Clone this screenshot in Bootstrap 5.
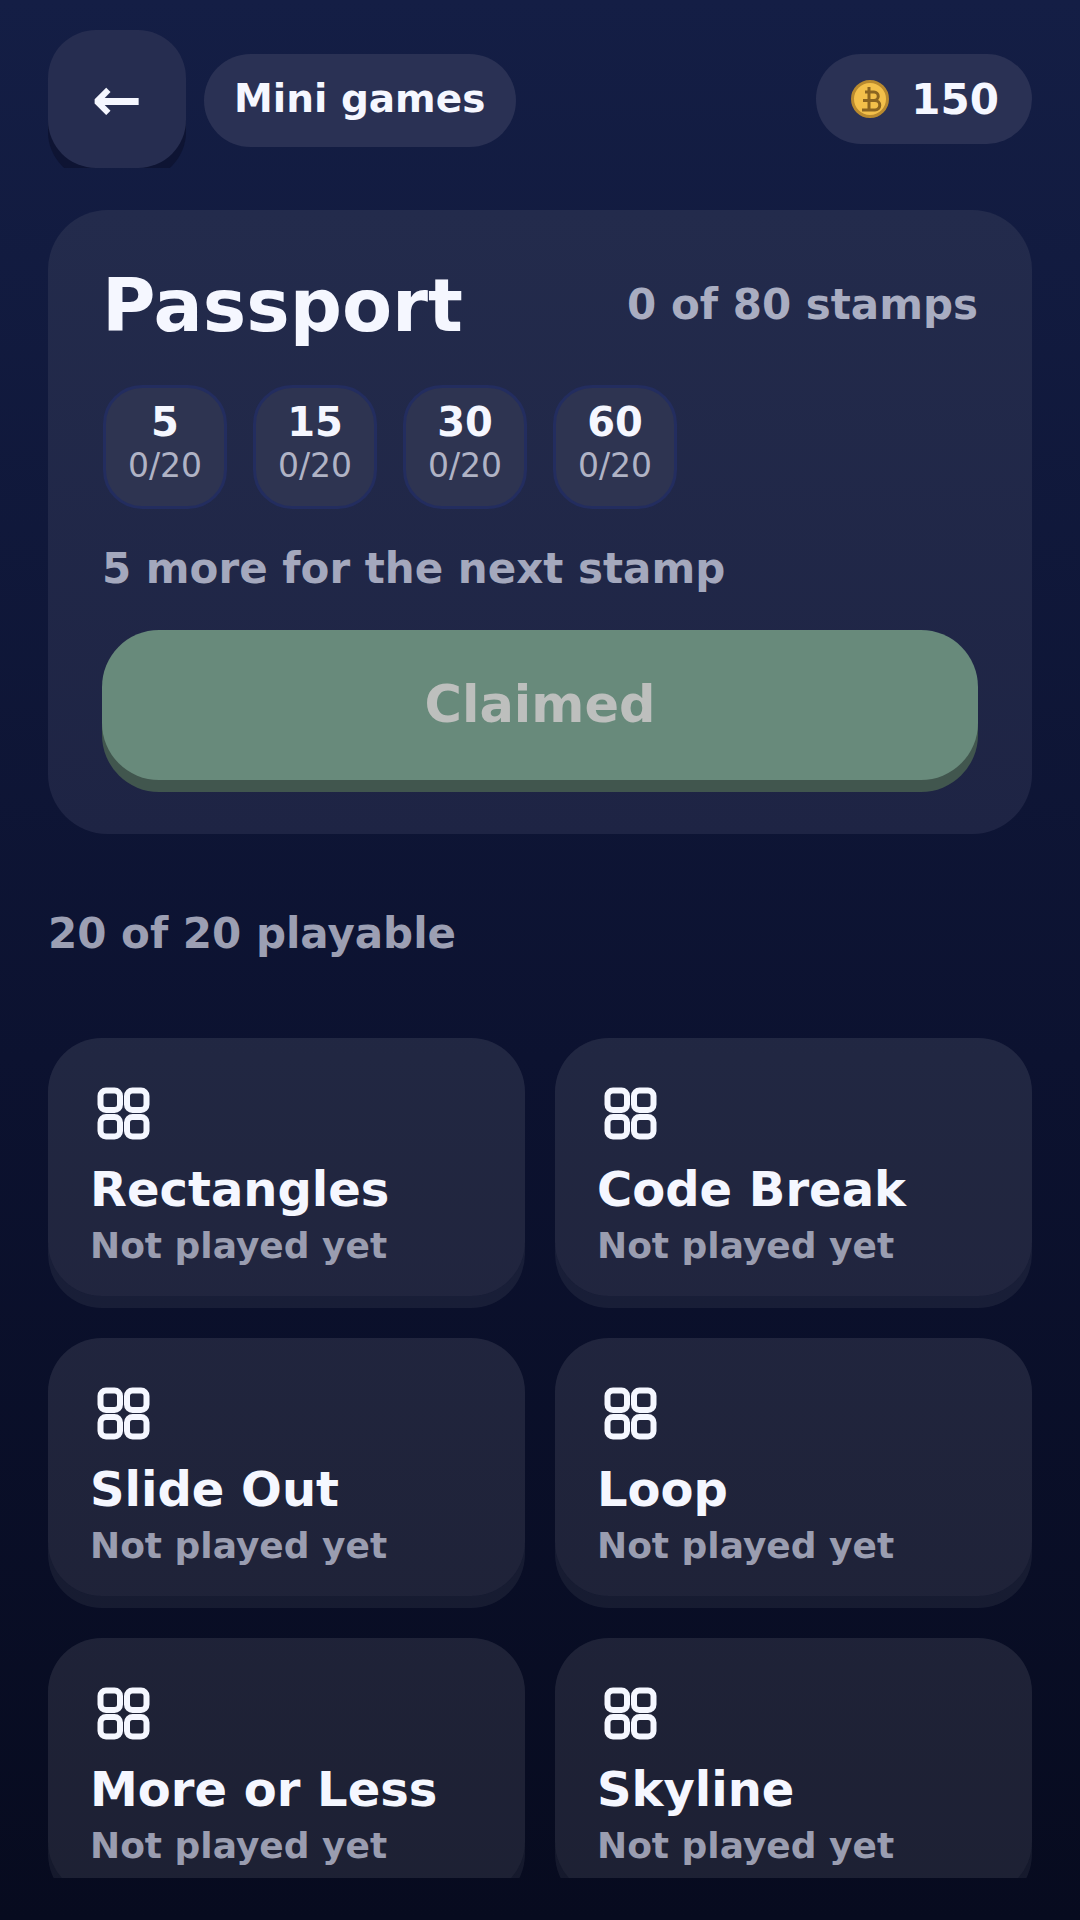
<!DOCTYPE html>
<html lang="en">
<head>
  <meta charset="UTF-8">
  <title>Mini games</title>
  <link href="https://cdn.jsdelivr.net/npm/bootstrap@5.3.3/dist/css/bootstrap.min.css" rel="stylesheet">
  <style>
    html, body { height: 1920px; }
    body {
      margin: 0;
      overflow: hidden;
      font-family: "DejaVu Sans", sans-serif;
      background: linear-gradient(180deg, #141e45 0%, #0c1230 55%, #070b1f 100%);
      color: #f5f7ff;
    }
    .app-shell { height: 1920px; padding: 30px 48px 42px; }
    .top-bar { height: 138px; overflow: hidden; gap: 18px; }
    .back-btn {
      width: 138px; height: 138px; flex: none;
      background: #262d50; border-radius: 48px;
      box-shadow: 0 12px 0 #0e1433;
      font-size: 60px; font-weight: 700; line-height: 1;
    }
    .top-pill { background: #2a3154; border-radius: 48px; font-weight: 700; }
    .title-pill { height: 93px; margin-top: 3px; padding: 0 31px 3px 30px; font-size: 39px; }
    .coin-pill { height: 90px; padding: 0 33px 0 35px; font-size: 42px; gap: 22px; }
    .scroll-area { flex: 1; min-height: 0; overflow: hidden; padding-top: 42px; }
    .passport-card {
      height: 624px; padding: 54px;
      background: linear-gradient(180deg, #232b4c, #1e2444);
      border-radius: 60px;
    }
    .passport-title { font-size: 73px; font-weight: 700; line-height: 84px; margin: 0; }
    .stamp-count { font-size: 42px; font-weight: 700; color: #a9adc1; margin-top: -4px; }
    .muted-line { font-size: 42px; font-weight: 700; color: #a4a8bd; line-height: 48px; }
    .tier-row { gap: 26px; margin-top: 37px; margin-bottom: 36px; padding-left: 1px; }
    .tier-chip {
      width: 124px; height: 124px; padding-top: 12px;
      background: #2e3451; border: 3px solid #232d5f; border-radius: 39px;
      text-align: center;
    }
    .tier-num { font-size: 40px; font-weight: 700; line-height: 44px; }
    .tier-sub { font-size: 33px; color: #b0b3c5; line-height: 40px; margin-top: 2px; }
    .claim-btn {
      height: 150px; margin-top: 37px;
      background: #688a7b; border-radius: 57px;
      box-shadow: 0 12px 0 #41564e;
      color: #bdbfbd; font-size: 51px; font-weight: 700;
    }
    .games-label { font-size: 42px; font-weight: 700; color: #9c9fb3; line-height: 48px; margin: 76px 0 80px; }
    .game-grid { display: grid; grid-template-columns: 477px 477px; column-gap: 30px; row-gap: 42px; }
    .game-tile {
      height: 258px; padding: 49px 42px 0;
      border-radius: 54px;
      background: rgba(255, 255, 255, .09);
      box-shadow: 0 12px 0 rgba(255, 255, 255, .06);
    }
    .game-tile svg { display: block; margin-left: 7px; }
    .game-name { font-size: 48px; font-weight: 700; line-height: 56px; margin-top: 20px; }
    .game-sub { font-size: 36px; font-weight: 700; color: #9a9db0; line-height: 44px; margin-top: 7px; }
  </style>
</head>
<body>
  <div class="app-shell d-flex flex-column">
    <div class="top-bar d-flex align-items-center flex-shrink-0">
      <div class="back-btn d-flex align-items-center justify-content-center">←</div>
      <div class="top-pill title-pill d-flex align-items-center">Mini games</div>
      <div class="top-pill coin-pill d-flex align-items-center ms-auto">
        <svg width="38" height="38" viewBox="0 0 38 38">
          <circle cx="19" cy="19" r="17.5" fill="#f3c04a" stroke="#b98a2e" stroke-width="3"/>
          <path d="M18 7v23M14 12h9a4.2 4.2 0 0 1 0 8.5H12M18 20.5h6a4.7 4.7 0 0 1 0 9.5H11" fill="none" stroke="#8a6420" stroke-width="3"/>
        </svg>
        <span>150</span>
      </div>
    </div>

    <div class="scroll-area">
      <div class="passport-card">
        <div class="d-flex justify-content-between align-items-center">
          <h1 class="passport-title">Passport</h1>
          <span class="stamp-count">0 of 80 stamps</span>
        </div>
        <div class="tier-row d-flex">
          <div class="tier-chip"><div class="tier-num">5</div><div class="tier-sub">0/20</div></div>
          <div class="tier-chip"><div class="tier-num">15</div><div class="tier-sub">0/20</div></div>
          <div class="tier-chip"><div class="tier-num">30</div><div class="tier-sub">0/20</div></div>
          <div class="tier-chip"><div class="tier-num">60</div><div class="tier-sub">0/20</div></div>
        </div>
        <div class="muted-line">5 more for the next stamp</div>
        <div class="claim-btn d-flex align-items-center justify-content-center">Claimed</div>
      </div>

      <div class="games-label">20 of 20 playable</div>

      <div class="game-grid" id="games"></div>
    </div>
  </div>

  <script>
    var names = ["Rectangles", "Code Break", "Slide Out", "Loop", "More or Less", "Skyline"];
    var icon = '<svg width="54" height="54" viewBox="0 0 54 54" fill="none" stroke="#f5f7ff" stroke-width="6">' +
      '<rect x="3.5" y="3.5" width="19.5" height="19.5" rx="5.5"/><rect x="30" y="3.5" width="19.5" height="19.5" rx="5.5"/>' +
      '<rect x="3.5" y="30" width="19.5" height="19.5" rx="5.5"/><rect x="30" y="30" width="19.5" height="19.5" rx="5.5"/></svg>';
    var html = "";
    names.forEach(function (n) {
      html += '<div class="game-tile">' + icon +
        '<div class="game-name">' + n + '</div><div class="game-sub">Not played yet</div></div>';
    });
    document.getElementById("games").innerHTML = html;
  </script>
  <script src="https://cdn.jsdelivr.net/npm/bootstrap@5.3.3/dist/js/bootstrap.bundle.min.js"></script>
</body>
</html>
